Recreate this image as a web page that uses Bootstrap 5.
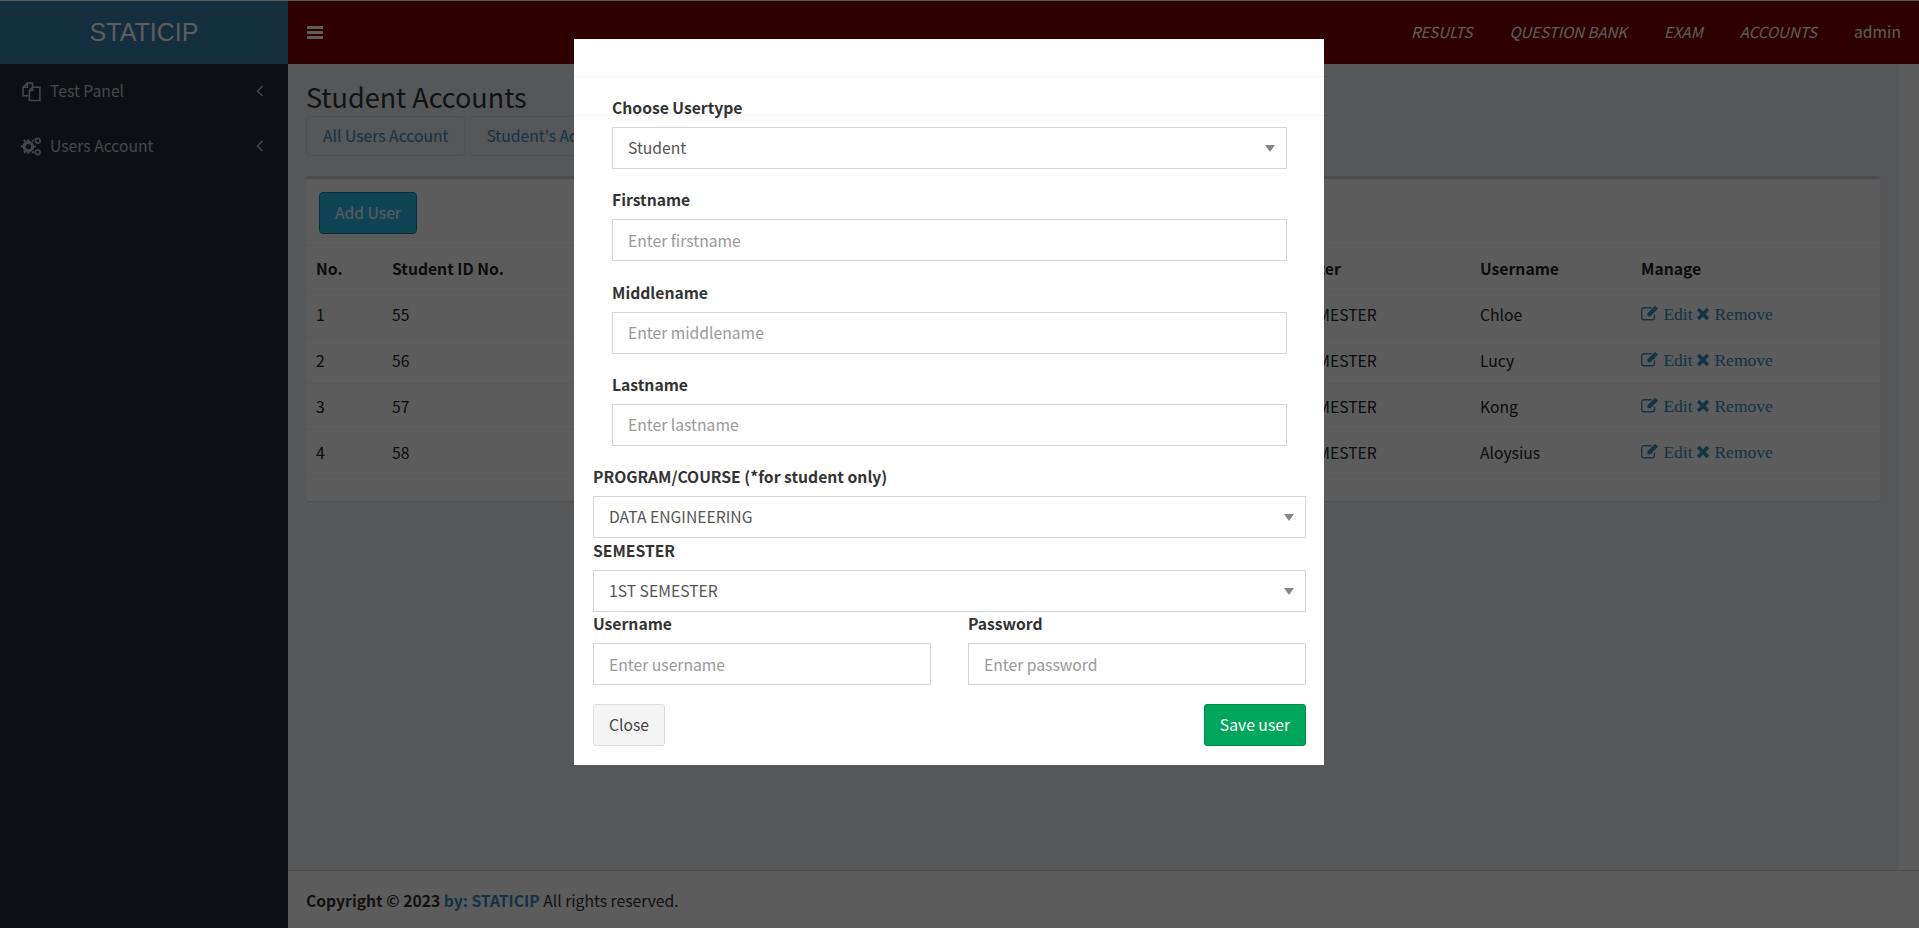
<!DOCTYPE html>
<html lang="en">
<head>
    <meta charset="UTF-8">
    <meta name="viewport" content="width=device-width, initial-scale=1.0">
    <title>Student Accounts</title>
    <link href="https://cdn.jsdelivr.net/npm/bootstrap@5.3.2/dist/css/bootstrap.min.css" rel="stylesheet">
    <style>
        html, body { height: 100%; overflow: hidden; }
        body {
            font-family: "Noto Sans CJK SC", "Open Sans", sans-serif;
            font-size: 15.7px;
            line-height: 1.42857;
            color: #333;
            background: #fff;
        }
        .app-shell { height: 928px; border-top: 1px solid #fff; }
        .top-bar { height: 63px; }
        .brand-box {
            width: 288px;
            background: #367fa9;
            color: #fff;
            font-family: "Liberation Sans", Arial, sans-serif;
            font-size: 25px;
        }
        .top-nav { background: #800000; padding: 0 18px 0 19px; }
        .top-nav a { color: #fff; text-decoration: none; font-size: 15.7px; margin-left: 37px; }
        .top-nav a.upper { font-style: italic; font-size: 15px; }
        .side-menu { width: 288px; background: #222d32; }
        .side-item { height: 55px; padding: 0 24px 1px 21px; color: #b8c7ce; }
        .side-item svg { flex: none; }
        .main-col { background: #fff; }
        .content-area { background: #ecf0f5; margin-right: 20px; }
        .page-title { font-size: 27px; line-height: 34px; margin: 0; padding: 16px 0 2px 18px; font-weight: 400; }
        .page-tabs { padding: 0 0 0 18px; }
        .page-tab {
            border: 1px solid #ddd; border-radius: 4px; color: #3c8dbc;
            padding: 0 16px; height: 40px; line-height: 38px; margin-right: 4px;
            text-decoration: none;
        }
        .white-box {
            margin: 20px 19px 0 18px;
            background: #fff;
            border-top: 3px solid #d2d6de;
            border-radius: 3px;
            padding: 13px 0 25px;
            box-shadow: 0 1px 1px rgba(0,0,0,.1);
        }
        .add-btn {
            background: #2abdec; border: 1px solid #167da1; color: #fff;
            border-radius: 4px; margin-left: 13px; height: 42px; width: 98px; padding: 0; font-size: 15.7px;
            display: block;
        }
        .user-table { table-layout: fixed; width: 100%; margin: 11px 0 0; --bs-table-bg: transparent; }
        .user-table th, .user-table td { padding: 0 10px; height: 46px; border-color: #f4f4f4; line-height: 22px; vertical-align: middle; }
        .user-table th { border-top: 1px solid #f4f4f4; border-bottom: 1px solid #f4f4f4; }
        .user-table td.manage-cell { padding-bottom: 2px; white-space: nowrap; }
        .manage-link { font-family: "Liberation Serif", serif; color: #3c8dbc; text-decoration: none; font-size: 17.5px; }
        .manage-link svg { vertical-align: -1px; }
        .foot-bar {
            background: #fff; border-top: 1px solid #d2d6de; height: 58px;
            padding: 3px 0 0 18px;
        }
        .foot-bar a { color: #3c8dbc; text-decoration: none; font-weight: 700; }
        .modal-backdrop.show { opacity: .64; }
        .user-dialog { width: 750px; max-width: 750px; margin: 39px 0 0 574px; }
        .user-dialog .modal-content { border: 0; border-radius: 0; }
        .user-dialog .modal-header { height: 38px; border-bottom: 1px solid #f4f4f4; padding: 0; border-radius: 0; }
        .line-stub { height: 39px; border-bottom: 1px solid #f4f4f4; margin-bottom: -39px; }
        .field-label { font-weight: 700; display: block; line-height: 22px; margin-bottom: 8px; }
        .field-group { margin-bottom: 20.3px; }
        .field-box {
            height: 42px; border: 1px solid #d2d6de; border-radius: 0; font-size: 15.7px;
            padding: 0 15px; color: #555; font-family: inherit; box-shadow: none;
        }
        .field-box::placeholder { color: #999; }
        select.field-box {
            background-position: right 10px center; background-size: 12px 12px;
            background-image: url("data:image/svg+xml,%3csvg xmlns='http://www.w3.org/2000/svg' viewBox='0 0 12 12'%3e%3cpath fill='%23888' d='M1 3h10L6 10z'/%3e%3c/svg%3e");
        }
        .inner-form { padding: 20px 37px 0 38px; }
        .outer-form { padding: 0 18px 19px 19px; }
        .tight-group { margin-top: 2px; }
        .cred-row { gap: 37px; margin-top: 1px; margin-bottom: 19px; }
        .cred-row > div { flex: 1 1 0; }
        .btn-close-grey { background: #f4f4f4; border: 1px solid #ddd; color: #444; border-radius: 3px; height: 42px; padding: 0 15px; font-size: 15.7px; }
        .btn-save { background: #00a65a; border: 1px solid #008d4c; color: #fff; border-radius: 3px; height: 42px; padding: 0 15px; font-size: 15.7px; }
    </style>
</head>
<body>
<div class="app-shell d-flex flex-column">
    <div class="top-bar d-flex flex-shrink-0">
        <div class="brand-box d-flex align-items-center justify-content-center">STATICIP</div>
        <div class="top-nav flex-grow-1 d-flex align-items-center">
            <svg width="16" height="15" viewBox="0 0 16 15" fill="#fff"><rect y="1" width="16" height="3" rx=".6"/><rect y="6" width="16" height="3" rx=".6"/><rect y="11" width="16" height="3" rx=".6"/></svg>
            <div class="ms-auto d-flex">
                <a class="upper" href="#">RESULTS</a>
                <a class="upper" href="#">QUESTION BANK</a>
                <a class="upper" href="#">EXAM</a>
                <a class="upper" href="#">ACCOUNTS</a>
                <a href="#">admin</a>
            </div>
        </div>
    </div>
    <div class="d-flex flex-grow-1 overflow-hidden">
        <div class="side-menu flex-shrink-0">
            <div class="side-item d-flex align-items-center gap-2">
                <svg width="21" height="21" viewBox="0 0 20 20" fill="none" stroke="#b8c7ce" stroke-width="1.5"><path d="M7 14H2V6l4-4h5v4"/><path d="M2 6h4V2"/><path d="M8 18.5V9l3-3h7v12.5zM8 9h3V6"/></svg>
                <span class="flex-grow-1">Test Panel</span>
                <svg width="8" height="12" viewBox="0 0 8 12" fill="none" stroke="#b8c7ce" stroke-width="1.5"><path d="M6.5 1 1.5 6l5 5"/></svg>
            </div>
            <div class="side-item d-flex align-items-center gap-2">
                <svg width="21" height="21" viewBox="0 0 20 20" fill="#b8c7ce"><circle cx="7" cy="10" r="4" fill="none" stroke="#b8c7ce" stroke-width="3"/><path d="M6 3h2v2H6zM6 15h2v2H6zM0 9h2v2H0zM12 9h2v2h-2zM2 4l2-1 1 2-2 1zM10 15l2-1 1 2-2 1zM2 15l1-1 2 1-1 2zM10 5l2-2 1 1-2 2z"/><circle cx="16" cy="4.5" r="2.2" fill="none" stroke="#b8c7ce" stroke-width="1.6"/><circle cx="16" cy="15.5" r="2.2" fill="none" stroke="#b8c7ce" stroke-width="1.6"/></svg>
                <span class="flex-grow-1">Users Account</span>
                <svg width="8" height="12" viewBox="0 0 8 12" fill="none" stroke="#b8c7ce" stroke-width="1.5"><path d="M6.5 1 1.5 6l5 5"/></svg>
            </div>
        </div>
        <div class="main-col flex-grow-1 d-flex flex-column">
            <div class="content-area flex-grow-1">
                <h1 class="page-title">Student Accounts</h1>
                <div class="page-tabs d-flex">
                    <a class="page-tab" href="#">All Users Account</a>
                    <a class="page-tab" href="#">Student's Account</a>
                </div>
                <div class="white-box">
                    <button class="add-btn" type="button">Add User</button>
                    <table class="table user-table">
                        <colgroup>
                            <col style="width:76px"><col style="width:300px"><col style="width:576px"><col style="width:212px"><col style="width:161px"><col>
                        </colgroup>
                        <thead>
                            <tr><th>No.</th><th>Student ID No.</th><th></th><th>Semester</th><th>Username</th><th>Manage</th></tr>
                        </thead>
                        <tbody id="rows"></tbody>
                    </table>
                </div>
            </div>
            <div class="foot-bar d-flex align-items-center flex-shrink-0">
                <span><b>Copyright © 2023 <a href="#">by: STATICIP</a></b> All rights reserved.</span>
            </div>
        </div>
    </div>
</div>

<div class="modal-backdrop fade show"></div>
<div class="modal fade show d-block">
    <div class="modal-dialog user-dialog">
        <div class="modal-content">
            <div class="modal-header"></div>
            <div class="line-stub"></div>
            <form>
                <div class="inner-form">
                    <div class="field-group"><label class="field-label">Choose Usertype</label>
                        <select class="form-select field-box"><option>Student</option></select></div>
                    <div class="field-group"><label class="field-label">Firstname</label>
                        <input class="form-control field-box" placeholder="Enter firstname"></div>
                    <div class="field-group"><label class="field-label">Middlename</label>
                        <input class="form-control field-box" placeholder="Enter middlename"></div>
                    <div class="field-group"><label class="field-label">Lastname</label>
                        <input class="form-control field-box" placeholder="Enter lastname"></div>
                </div>
                <div class="outer-form">
                    <label class="field-label">PROGRAM/COURSE (*for student only)</label>
                    <select class="form-select field-box"><option>DATA ENGINEERING</option></select>
                    <div class="tight-group"><label class="field-label">SEMESTER</label>
                        <select class="form-select field-box"><option>1ST SEMESTER</option></select></div>
                    <div class="d-flex cred-row">
                        <div><label class="field-label">Username</label>
                            <input class="form-control field-box" placeholder="Enter username"></div>
                        <div><label class="field-label">Password</label>
                            <input class="form-control field-box" placeholder="Enter password"></div>
                    </div>
                    <div class="d-flex justify-content-between">
                        <button type="button" class="btn-close-grey">Close</button>
                        <button type="button" class="btn-save">Save user</button>
                    </div>
                </div>
            </form>
        </div>
    </div>
</div>

<script src="https://cdn.jsdelivr.net/npm/bootstrap@5.3.2/dist/js/bootstrap.bundle.min.js"></script>
<script>
    const users = [[1, 55, 'Chloe'], [2, 56, 'Lucy'], [3, 57, 'Kong'], [4, 58, 'Aloysius']];
    const editIcon = '<svg width="18" height="16" viewBox="0 0 18 16" fill="none" stroke="#3c8dbc" stroke-width="1.4"><path d="M13.5 9.5V12.5a2.3 2.3 0 0 1-2.3 2.3H3a2.3 2.3 0 0 1-2.3-2.3V5A2.3 2.3 0 0 1 3 2.7h7.500"/><path fill="#3c8dbc" stroke="none" d="M6.5 8.3 14 .8l3 3-7.500 7.500H6.500z"/></svg>';
    const removeIcon = '<svg width="14" height="14" viewBox="0 0 14 14"><path fill="#3c8dbc" d="M3.3.8 7 4.5 10.7.8 13.2 3.3 9.5 7l3.7 3.7-2.500 2.500L7 9.500l-3.700 3.700L.8 10.700 4.500 7 .8 3.300z"/></svg>';
    document.getElementById('rows').innerHTML = users.map(u => `<tr><td>${u[0]}</td><td>${u[1]}</td><td></td><td>1ST SEMESTER</td><td>${u[2]}</td><td class="manage-cell"><a class="manage-link" href="#">${editIcon} Edit</a> <a class="manage-link" href="#">${removeIcon} Remove</a></td></tr>`).join('');
</script>
</body>
</html>
